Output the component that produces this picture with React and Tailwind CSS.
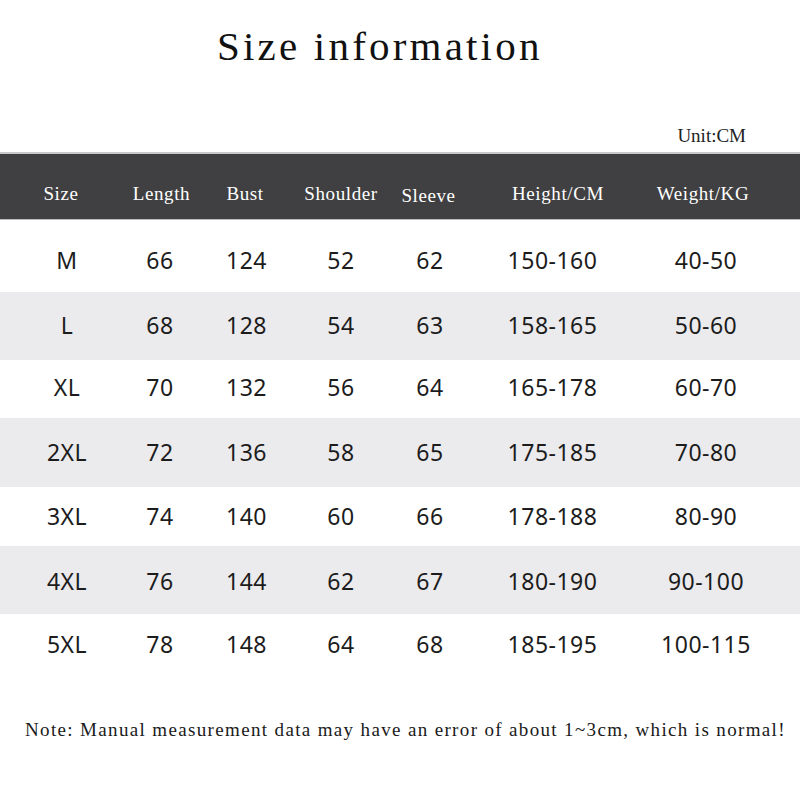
import React from "react";

const serif = { fontFamily: '"Liberation Serif", "Times New Roman", serif' };
const sans = { fontFamily: '"Noto Sans", "Open Sans", sans-serif' };

const headerCols = [
  { label: "Size", w: "w-[122px]" },
  { label: "Length", w: "w-[79px]" },
  { label: "Bust", w: "w-[88px]" },
  { label: "Shoulder", w: "w-[104px]" },
  { label: "Sleeve", w: "w-[71px]", extra: "pt-[2px]" },
  { label: "Height/CM", w: "w-[188px]" },
  { label: "Weight/KG", w: "w-[102px]" },
];

const dataWidths = [
  "w-[134px]",
  "w-[52px]",
  "w-[121px]",
  "w-[68px]",
  "w-[110px]",
  "w-[135px]",
  "w-[172px]",
];

const rows = [
  { cells: ["M", "66", "124", "52", "62", "150-160", "40-50"], cls: "h-[72px] pt-[29px] bg-white" },
  { cells: ["L", "68", "128", "54", "63", "158-165", "50-60"], cls: "h-[68px] pt-[22px] bg-[#ebeaec]" },
  { cells: ["XL", "70", "132", "56", "64", "165-178", "60-70"], cls: "h-[58px] pt-[16px] bg-white" },
  { cells: ["2XL", "72", "136", "58", "65", "175-185", "70-80"], cls: "h-[69px] pt-[23px] bg-[#ebeaec]" },
  { cells: ["3XL", "74", "140", "60", "66", "178-188", "80-90"], cls: "h-[59px] pt-[18px] bg-white" },
  { cells: ["4XL", "76", "144", "62", "67", "180-190", "90-100"], cls: "h-[68px] pt-[24px] bg-[#ebeaec]" },
  { cells: ["5XL", "78", "148", "64", "68", "185-195", "100-115"], cls: "h-[66px] pt-[19px] bg-white" },
];

export default function App() {
  return (
    <div className="w-[800px] h-[800px] bg-white overflow-hidden flex flex-col">
      <div className="pt-[26px] pl-[217px]">
        <div
          className="text-[41px] leading-none tracking-[3.2px] text-[#111] whitespace-nowrap"
          style={serif}
        >
          Size information
        </div>
      </div>

      <div className="mt-[59px] flex justify-end pr-[54px]">
        <div className="text-[19px] leading-none text-[#222] whitespace-nowrap" style={serif}>
          Unit:CM
        </div>
      </div>

      <div className="mt-[7px] h-[68px] bg-[#403f41] border-t-2 border-[#c9c9c9] border-b border-b-[#bdbdbd] flex items-start pt-[30px]">
        {headerCols.map((c) => (
          <div
            key={c.label}
            className={`${c.w} shrink-0 text-center text-[19px] leading-none tracking-[0.6px] text-white whitespace-nowrap ${c.extra || ""}`}
            style={serif}
          >
            {c.label}
          </div>
        ))}
      </div>

      <div className="flex flex-col">
        {rows.map((r) => (
          <div key={r.cells[0]} className={`flex items-start ${r.cls}`}>
            {r.cells.map((v, i) => (
              <div
                key={i}
                className={`${dataWidths[i]} shrink-0 text-center text-[23px] leading-none tracking-[0.5px] text-[#1c1c1c] whitespace-nowrap`}
                style={sans}
              >
                {v}
              </div>
            ))}
          </div>
        ))}
      </div>

      <div className="mt-[40px] pl-[25px]">
        <div
          className="text-[19px] leading-none tracking-[1.35px] text-[#1a1a1a] whitespace-nowrap"
          style={serif}
        >
          Note: Manual measurement data may have an error of about 1~3cm, which is normal!
        </div>
      </div>
    </div>
  );
}
